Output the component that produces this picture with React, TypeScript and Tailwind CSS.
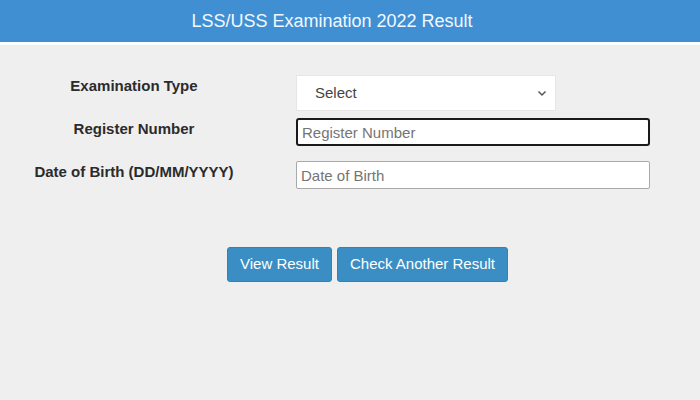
import React from 'react';

const font = { fontFamily: '"Liberation Sans", Arial, sans-serif' };

const App: React.FC = () => {
  return (
    <div className="w-[700px] h-[400px] bg-[#efefef] overflow-hidden" style={font}>
      <div className="h-[42px] bg-[#408fd3] flex items-center justify-center pr-[36px]">
        <h1 className="text-[18px] text-[#f2f8ff] leading-none pb-[1px]">LSS/USS Examination 2022 Result</h1>
      </div>
      <div className="h-[3px] bg-white" />

      <div className="pt-[30px]">
        <div className="flex items-start">
          <label className="w-[268px] text-center text-[15px] font-bold text-[#2b2b2b] leading-[18px] pt-[2px]">
            Examination Type
          </label>
          <div className="ml-[28px] w-[260px] h-[36px] bg-white border border-[#e6e6e6] flex items-center justify-between pl-[18px] pr-[7px]">
            <span className="text-[15px] text-[#444]">Select</span>
            <svg width="12" height="12" viewBox="0 0 12 12" fill="none" stroke="#555" strokeWidth="1.5">
              <path d="M2.5 4.5 L6 8 L9.5 4.5" />
            </svg>
          </div>
        </div>

        <div className="flex items-start mt-[7px]">
          <label className="w-[268px] text-center text-[15px] font-bold text-[#2b2b2b] leading-[18px] pt-[2px]">
            Register Number
          </label>
          <input
            className="ml-[28px] w-[354px] h-[28px] bg-white border-2 border-[#1a1a1a] rounded-[3px] px-[4px] text-[15px] outline-none placeholder:text-[#757575]"
            placeholder="Register Number"
          />
        </div>

        <div className="flex items-start mt-[15px]">
          <label className="w-[268px] text-center text-[15px] font-bold text-[#2b2b2b] leading-[18px] pt-[2px]">
            Date of Birth (DD/MM/YYYY)
          </label>
          <input
            className="ml-[28px] w-[354px] h-[28px] bg-white border border-[#a9a9a9] rounded-[2px] px-[4px] text-[15px] outline-none placeholder:text-[#757575]"
            placeholder="Date of Birth"
          />
        </div>

        <div className="flex gap-[5px] ml-[227px] mt-[58px]">
          <button className="h-[35px] w-[105px] bg-[#3a8ec3] text-white text-[15px] rounded-[3px] border border-[#3482b3]">
            View Result
          </button>
          <button className="h-[35px] w-[171px] bg-[#3a8ec3] text-white text-[15px] rounded-[3px] border border-[#3482b3]">
            Check Another Result
          </button>
        </div>
      </div>
    </div>
  );
};

export default App;
